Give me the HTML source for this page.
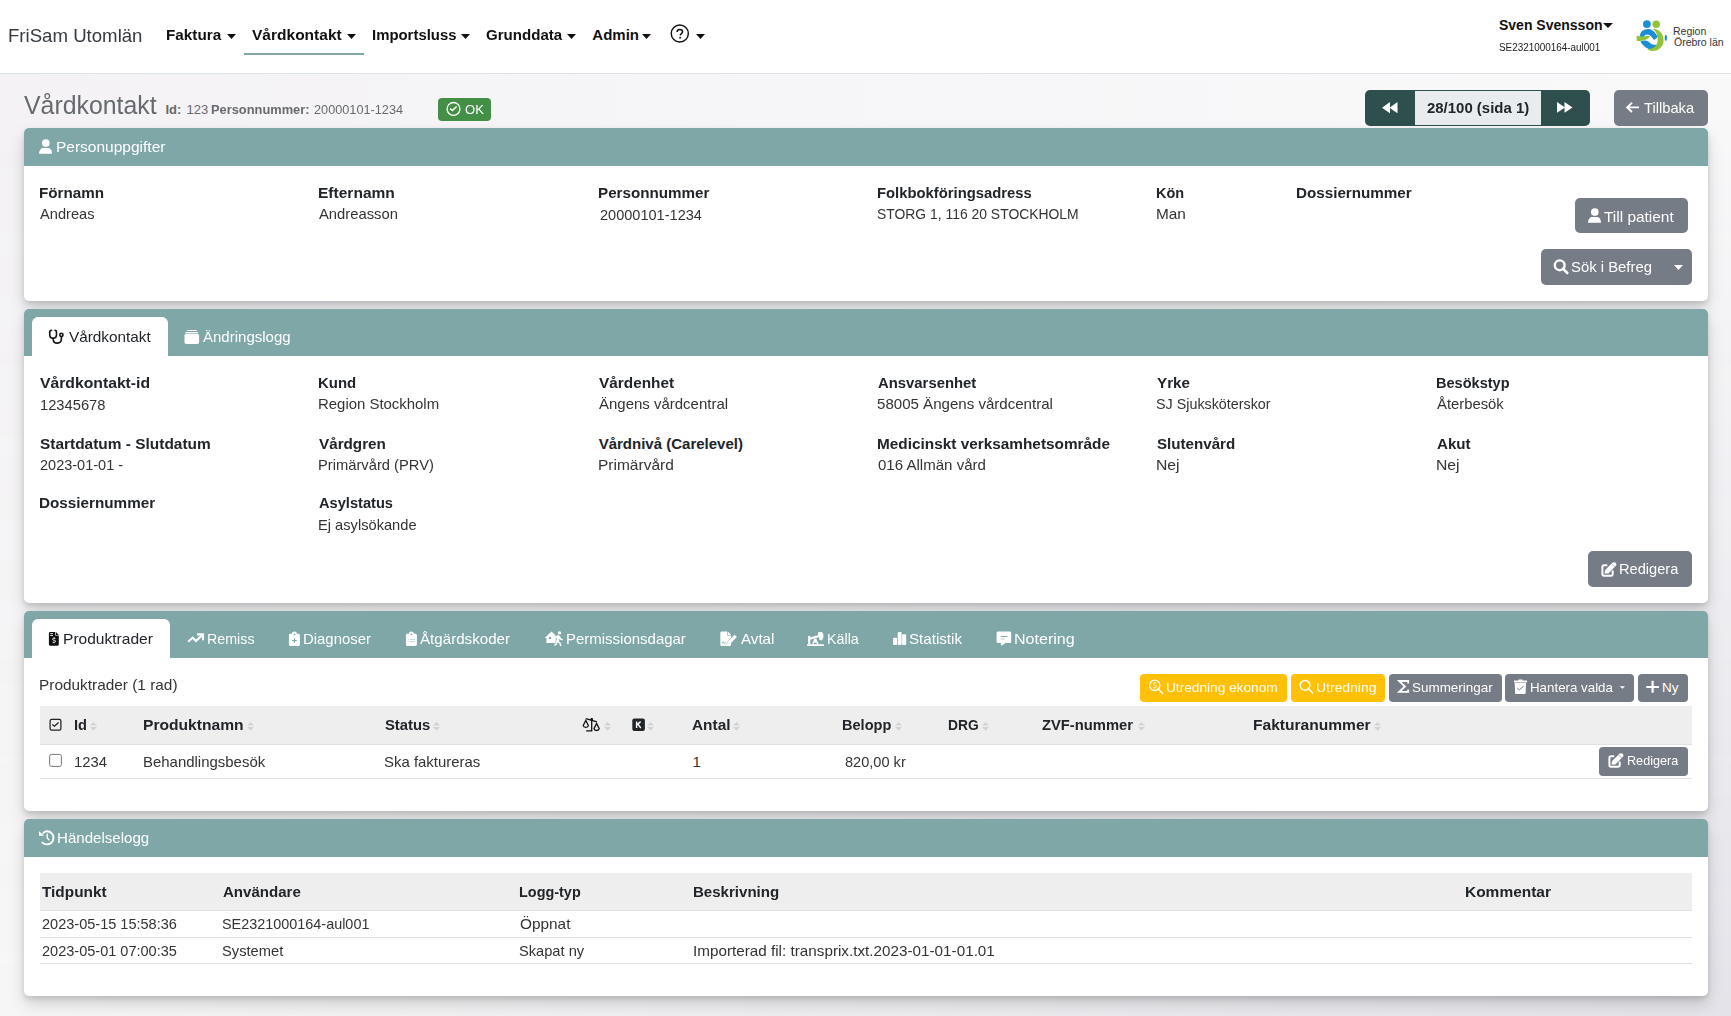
<!DOCTYPE html>
<html><head><meta charset="utf-8"><title>Vårdkontakt</title>
<style>
html,body{margin:0;padding:0}
body{width:1731px;height:1016px;overflow:hidden;position:relative;background:#f5f5f7;font-family:"Liberation Sans",sans-serif}
.a{position:absolute;box-sizing:border-box}
.t{position:absolute;line-height:1;white-space:nowrap}
svg.a{overflow:visible}
</style></head><body>
<div class="a" style="left:0px;top:0px;width:1731px;height:1016px;background:linear-gradient(to right,#f4f2f5,#f9f9fa)"></div>
<div class="a" style="left:0px;top:0px;width:1731px;height:1016px;background:linear-gradient(to right,#f6f6f6,#e4e3e9);-webkit-mask-image:linear-gradient(to bottom,transparent 10%,#000 100%);mask-image:linear-gradient(to bottom,transparent 10%,#000 100%)"></div>
<div class="a" style="left:0px;top:0px;width:1731px;height:74px;background:#fff;border-bottom:1px solid #dee2e6"></div>
<div class="t" style="left:7.79px;top:27.42px;font-size:18.4px;font-weight:400;color:#343a40;transform:scaleX(1.0122);transform-origin:0 0;">FriSam Utomlän</div>
<div class="t" style="left:166.18px;top:27.30px;font-size:15px;font-weight:700;color:#111;transform:scaleX(1.0185);transform-origin:0 0;">Faktura</div>
<div class="t" style="left:252.20px;top:27.30px;font-size:15px;font-weight:700;color:#111;transform:scaleX(1.0345);transform-origin:0 0;">Vårdkontakt</div>
<div class="t" style="left:371.51px;top:27.30px;font-size:15px;font-weight:700;color:#111;transform:scaleX(0.9940);transform-origin:0 0;">Importsluss</div>
<div class="t" style="left:485.80px;top:27.30px;font-size:15px;font-weight:700;color:#111;transform:scaleX(1.0053);transform-origin:0 0;">Grunddata</div>
<div class="t" style="left:592.30px;top:27.30px;font-size:15px;font-weight:700;color:#111;transform:scaleX(1.0000);transform-origin:0 0;">Admin</div>
<svg class="a" style="left:226.5px;top:33.9px;" width="9" height="5" viewBox="0 0 9 5" fill="#111"><path d="M0 0H9L4.5 5Z"/></svg>
<svg class="a" style="left:347.0px;top:33.9px;" width="9" height="5" viewBox="0 0 9 5" fill="#111"><path d="M0 0H9L4.5 5Z"/></svg>
<svg class="a" style="left:460.8px;top:33.9px;" width="9" height="5" viewBox="0 0 9 5" fill="#111"><path d="M0 0H9L4.5 5Z"/></svg>
<svg class="a" style="left:567.0px;top:33.9px;" width="9" height="5" viewBox="0 0 9 5" fill="#111"><path d="M0 0H9L4.5 5Z"/></svg>
<svg class="a" style="left:642.0px;top:33.9px;" width="9" height="5" viewBox="0 0 9 5" fill="#111"><path d="M0 0H9L4.5 5Z"/></svg>
<svg class="a" style="left:695.5px;top:33.9px;" width="9" height="5" viewBox="0 0 9 5" fill="#111"><path d="M0 0H9L4.5 5Z"/></svg>
<div class="a" style="left:244px;top:53px;width:120px;height:2px;background:#7fa7a7"></div>
<svg class="a" style="left:660px;top:18px" width="40" height="30" viewBox="0 0 40 30" fill="#fff" stroke="none"><circle cx="19.8" cy="15.5" r="8.55" fill="none" stroke="#111" stroke-width="1.45"/><path d="M17.1 13.9 C17.1 12.3 18.3 11.5 19.8 11.5 C21.5 11.5 22.6 12.4 22.6 13.8 C22.6 15.6 20.2 15.7 20.2 17.6" fill="none" stroke="#111" stroke-width="1.5"/><circle cx="20.1" cy="19.7" r="0.95" fill="#111"/></svg>
<div class="t" style="left:1499.00px;top:17.65px;font-size:14px;font-weight:700;color:#111;transform:scaleX(1.0000);transform-origin:0 0;">Sven Svensson</div>
<svg class="a" style="left:1602.5px;top:23px;" width="10" height="5" viewBox="0 0 10 5" fill="#111"><path d="M0 0H10L5 5Z"/></svg>
<div class="t" style="left:1499.00px;top:43.03px;font-size:10px;font-weight:400;color:#222;transform:scaleX(0.9902);transform-origin:0 0;">SE2321000164-aul001</div>
<svg class="a" style="left:1636px;top:20px;" width="32" height="32" viewBox="0 0 32 32" fill="#fff">
<circle cx="10.9" cy="4.1" r="3.9" fill="#1a8fd6"/>
<circle cx="20.2" cy="4.3" r="3.8" fill="#93c33b"/>
<path d="M4 18 C3 11 9 8.5 13 9 C17 9.5 19.5 13 22 17 L18 20 C16 17 14 14.5 11.5 14.5 C9 14.5 8 16 8 18 Z" fill="#1a8fd6"/>
<path d="M4.5 21.5 C7 20 11 20 13.5 22.5 C16 25 19 25.5 22 24 L21 29.5 C16 31 11 29 8 26 C6.5 24.5 5 23 4.5 21.5Z" fill="#1a8fd6"/>
<path d="M16.3 8.6 C23 8.8 27.6 13.5 27.6 20.5 C27.6 26.8 22.5 30.9 16.8 30.9 C14 30.9 12.2 30.1 11.2 29 C17 29.2 21.7 26.2 21.7 19.8 C21.7 14.4 19.6 10.8 16.3 8.6Z" fill="#93c33b"/>
<path d="M0.7 15.5 C4 16.5 7 17 10 16 C12 15.5 13 15.5 14 16.5 C12 19 9 21 0.7 21Z" fill="#93c33b"/>
<ellipse cx="29.8" cy="17.9" rx="1.15" ry="3.1" fill="#1a8fd6"/>
</svg>
<div class="t" style="left:1673.00px;top:26.31px;font-size:10.5px;font-weight:400;color:#333;transform:scaleX(1.0000);transform-origin:0 0;">Region</div>
<div class="t" style="left:1674.00px;top:36.61px;font-size:10.5px;font-weight:400;color:#333;transform:scaleX(1.0000);transform-origin:0 0;">Örebro län</div>
<div class="t" style="left:24.20px;top:92.64px;font-size:25px;font-weight:400;color:#666a6e;transform:scaleX(0.9940);transform-origin:0 0;">Vårdkontakt</div>
<div class="t" style="left:165.50px;top:102.80px;font-size:13px;font-weight:700;color:#666a6e;">Id:</div>
<div class="t" style="left:186.50px;top:102.80px;font-size:13px;font-weight:400;color:#666a6e;">123</div>
<div class="t" style="left:210.51px;top:102.80px;font-size:13px;font-weight:700;color:#666a6e;transform:scaleX(0.9878);transform-origin:0 0;">Personnummer:</div>
<div class="t" style="left:314.20px;top:102.80px;font-size:13px;font-weight:400;color:#666a6e;transform:scaleX(0.9780);transform-origin:0 0;">20000101-1234</div>
<div class="a" style="left:438px;top:98px;width:53px;height:23px;background:#428f45;border-radius:4px"></div>
<svg class="a" style="left:440px;top:98px" width="30" height="24" viewBox="0 0 30 24" fill="#fff" stroke="none"><circle cx="13.5" cy="10.9" r="6.4" fill="none" stroke="#fff" stroke-width="1.35"/><path d="M10.1 10.7 L12.4 12.6 L16.6 8.5" fill="none" stroke="#fff" stroke-width="1.5"/></svg>
<div class="t" style="left:465.10px;top:103.17px;font-size:13.5px;font-weight:400;color:#fff;transform:scaleX(0.9684);transform-origin:0 0;">OK</div>
<div class="a" style="left:1365px;top:90px;width:225px;height:36px;background:#2f4f4f;border-radius:5px"></div>
<div class="a" style="left:1415px;top:91px;width:126px;height:34px;background:#e9ecef"></div>
<div class="t" style="left:1426.70px;top:100.30px;font-size:15px;font-weight:700;color:#212529;transform:scaleX(0.9961);transform-origin:0 0;">28/100 (sida 1)</div>
<svg class="a" style="left:1382px;top:101.8px;" width="15.5" height="11.3" viewBox="0 0 15.5 11.3" fill="#fff"><path d="M8 0V11.3L0 5.65Z"/><path d="M15.5 0V11.3L7.5 5.65Z"/></svg>
<svg class="a" style="left:1557.2px;top:102.2px;" width="15.5" height="10.8" viewBox="0 0 15.5 10.8" fill="#fff"><path d="M0 0V10.8L8 5.4Z"/><path d="M7.5 0V10.8L15.5 5.4Z"/></svg>
<div class="a" style="left:1614px;top:90px;width:94px;height:36px;background:#757c86;border-radius:5px"></div>
<svg class="a" style="left:1626.4px;top:102.2px;" width="13.3" height="10.8" viewBox="0 0 13.3 10.8" fill="#fff"><path d="M13 5.4H1.5M6 0.8L1.2 5.4L6 10" fill="none" stroke="#fff" stroke-width="1.9"/></svg>
<div class="t" style="left:1644.00px;top:100.30px;font-size:15px;font-weight:400;color:#fff;transform:scaleX(0.9804);transform-origin:0 0;">Tillbaka</div>
<div class="a" style="left:24px;top:128px;width:1684px;height:173px;background:#fff;border-radius:5px;box-shadow:0 3px 5px rgba(0,0,0,.12),0 8px 16px rgba(0,0,0,.15)"></div>
<div class="a" style="left:24px;top:128px;width:1684px;height:38px;background:#7fa7a7;border-radius:5px 5px 0 0"></div>
<svg class="a" style="left:34px;top:134px" width="26" height="26" viewBox="0 0 26 26" fill="#fff" stroke="none"><circle cx="11.8" cy="9.1" r="3.85"/><path d="M5.1 19.8 C5.1 16 7.2 14.1 9.6 14.1 H14 C16.2 14.1 18 16 18 19.8 Z"/></svg>
<div class="t" style="left:55.59px;top:139.25px;font-size:15.3px;font-weight:400;color:#fff;transform:scaleX(1.0131);transform-origin:0 0;">Personuppgifter</div>
<div class="t" style="left:39.09px;top:185.30px;font-size:15px;font-weight:700;color:#212529;transform:scaleX(1.0143);transform-origin:0 0;">Förnamn</div>
<div class="t" style="left:40.10px;top:206.30px;font-size:15px;font-weight:400;color:#333;transform:scaleX(0.9750);transform-origin:0 0;">Andreas</div>
<div class="t" style="left:318.06px;top:185.30px;font-size:15px;font-weight:700;color:#212529;transform:scaleX(1.0356);transform-origin:0 0;">Efternamn</div>
<div class="t" style="left:319.10px;top:206.30px;font-size:15px;font-weight:400;color:#333;transform:scaleX(0.9862);transform-origin:0 0;">Andreasson</div>
<div class="t" style="left:597.89px;top:185.30px;font-size:15px;font-weight:700;color:#212529;transform:scaleX(1.0128);transform-origin:0 0;">Personnummer</div>
<div class="t" style="left:600.20px;top:207.30px;font-size:15px;font-weight:400;color:#333;transform:scaleX(0.9695);transform-origin:0 0;">20000101-1234</div>
<div class="t" style="left:877.11px;top:185.30px;font-size:15px;font-weight:700;color:#212529;transform:scaleX(0.9877);transform-origin:0 0;">Folkbokföringsadress</div>
<div class="t" style="left:877.17px;top:206.30px;font-size:15px;font-weight:400;color:#333;transform:scaleX(0.9269);transform-origin:0 0;">STORG 1, 116 20 STOCKHOLM</div>
<div class="t" style="left:1156.34px;top:185.30px;font-size:15px;font-weight:700;color:#212529;transform:scaleX(0.9643);transform-origin:0 0;">Kön</div>
<div class="t" style="left:1156.27px;top:206.30px;font-size:15px;font-weight:400;color:#333;transform:scaleX(1.0250);transform-origin:0 0;">Man</div>
<div class="t" style="left:1295.99px;top:185.30px;font-size:15px;font-weight:700;color:#212529;transform:scaleX(1.0133);transform-origin:0 0;">Dossiernummer</div>
<div class="a" style="left:1575px;top:198px;width:113px;height:35px;background:#757c86;border-radius:5px"></div>
<svg class="a" style="left:1582.5px;top:203.1px" width="26" height="26" viewBox="0 0 26 26" fill="#fff" stroke="none"><circle cx="11.8" cy="9.1" r="3.85"/><path d="M5.1 19.8 C5.1 16 7.2 14.1 9.6 14.1 H14 C16.2 14.1 18 16 18 19.8 Z"/></svg>
<div class="t" style="left:1604.40px;top:208.60px;font-size:15px;font-weight:400;color:#fff;transform:scaleX(1.0279);transform-origin:0 0;">Till patient</div>
<div class="a" style="left:1541px;top:249px;width:151px;height:36px;background:#757c86;border-radius:5px"></div>
<svg class="a" style="left:1548px;top:254px" width="26" height="26" viewBox="0 0 26 26" fill="#fff" stroke="none"><circle cx="11.7" cy="11.3" r="4.9" fill="none" stroke="#fff" stroke-width="2.4"/><path d="M15.2 14.9 L19.3 19" stroke="#fff" stroke-width="2.6" stroke-linecap="round"/></svg>
<div class="t" style="left:1571.31px;top:258.80px;font-size:15px;font-weight:400;color:#fff;transform:scaleX(0.9912);transform-origin:0 0;">Sök i Befreg</div>
<svg class="a" style="left:1674px;top:265px;" width="9" height="5" viewBox="0 0 9 5" fill="#fff"><path d="M0 0H9L4.5 5Z"/></svg>
<div class="a" style="left:24px;top:309px;width:1684px;height:294px;background:#fff;border-radius:5px;box-shadow:0 3px 5px rgba(0,0,0,.12),0 8px 16px rgba(0,0,0,.15)"></div>
<div class="a" style="left:24px;top:309px;width:1684px;height:47px;background:#7fa7a7;border-radius:5px 5px 0 0"></div>
<div class="a" style="left:32px;top:317px;width:136px;height:40px;background:#fff;border-radius:6px 6px 0 0"></div>
<svg class="a" style="left:44px;top:326px" width="26" height="26" viewBox="0 0 26 26" fill="#fff" stroke="none"><g fill="none" stroke="#111" stroke-width="1.6" stroke-linecap="round"><path d="M7.6 4.3 C6.3 4.3 5.7 5.4 5.7 6.8 V8.6 C5.7 10.8 7.2 12.3 9.1 12.3 C11 12.3 12.5 10.8 12.5 8.6 V6.8 C12.5 5.4 11.9 4.3 11 4.3"/><path d="M9.1 12.4 C9.1 15.3 11 17.1 13.4 17.1 C15.8 17.1 17.4 15.3 17.4 12.8 V10.6"/><circle cx="17.4" cy="8.9" r="1.6"/></g></svg>
<div class="t" style="left:68.60px;top:328.80px;font-size:15px;font-weight:400;color:#212529;transform:scaleX(1.0213);transform-origin:0 0;">Vårdkontakt</div>
<svg class="a" style="left:180px;top:326px" width="26" height="26" viewBox="0 0 26 26" fill="#fff" stroke="none"><rect x="7.1" y="3.9" width="9.8" height="1.1" rx="0.5"/><rect x="5.4" y="6.1" width="12.6" height="1.05" rx="0.5"/><rect x="4.5" y="7.8" width="14.6" height="10.2" rx="1.8"/></svg>
<div class="t" style="left:202.90px;top:328.80px;font-size:15px;font-weight:400;color:#fff;transform:scaleX(1.0011);transform-origin:0 0;">Ändringslogg</div>
<div class="t" style="left:39.70px;top:375.30px;font-size:15px;font-weight:700;color:#212529;transform:scaleX(1.0481);transform-origin:0 0;">Vårdkontakt-id</div>
<div class="t" style="left:40.32px;top:397.20px;font-size:15px;font-weight:400;color:#333;transform:scaleX(0.9803);transform-origin:0 0;">12345678</div>
<div class="t" style="left:317.90px;top:375.30px;font-size:15px;font-weight:700;color:#212529;transform:scaleX(0.9973);transform-origin:0 0;">Kund</div>
<div class="t" style="left:317.90px;top:396.20px;font-size:15px;font-weight:400;color:#333;transform:scaleX(0.9950);transform-origin:0 0;">Region Stockholm</div>
<div class="t" style="left:598.70px;top:375.30px;font-size:15px;font-weight:700;color:#212529;transform:scaleX(1.0247);transform-origin:0 0;">Vårdenhet</div>
<div class="t" style="left:598.70px;top:396.20px;font-size:15px;font-weight:400;color:#333;transform:scaleX(0.9984);transform-origin:0 0;">Ängens vårdcentral</div>
<div class="t" style="left:877.90px;top:375.30px;font-size:15px;font-weight:700;color:#212529;transform:scaleX(0.9909);transform-origin:0 0;">Ansvarsenhet</div>
<div class="t" style="left:876.90px;top:396.20px;font-size:15px;font-weight:400;color:#333;transform:scaleX(1.0046);transform-origin:0 0;">58005 Ängens vårdcentral</div>
<div class="t" style="left:1157.10px;top:375.30px;font-size:15px;font-weight:700;color:#212529;transform:scaleX(1.0125);transform-origin:0 0;">Yrke</div>
<div class="t" style="left:1156.15px;top:396.20px;font-size:15px;font-weight:400;color:#333;transform:scaleX(0.9546);transform-origin:0 0;">SJ Sjuksköterskor</div>
<div class="t" style="left:1436.03px;top:375.30px;font-size:15px;font-weight:700;color:#212529;transform:scaleX(0.9693);transform-origin:0 0;">Besökstyp</div>
<div class="t" style="left:1437.00px;top:396.20px;font-size:15px;font-weight:400;color:#333;transform:scaleX(0.9882);transform-origin:0 0;">Återbesök</div>
<div class="t" style="left:39.70px;top:435.60px;font-size:15px;font-weight:700;color:#212529;transform:scaleX(1.0297);transform-origin:0 0;">Startdatum - Slutdatum</div>
<div class="t" style="left:39.70px;top:456.90px;font-size:15px;font-weight:400;color:#333;transform:scaleX(0.9674);transform-origin:0 0;">2023-01-01 -</div>
<div class="t" style="left:318.90px;top:435.60px;font-size:15px;font-weight:700;color:#212529;transform:scaleX(1.0154);transform-origin:0 0;">Vårdgren</div>
<div class="t" style="left:317.92px;top:456.90px;font-size:15px;font-weight:400;color:#333;transform:scaleX(0.9819);transform-origin:0 0;">Primärvård (PRV)</div>
<div class="t" style="left:598.70px;top:435.60px;font-size:15px;font-weight:700;color:#212529;transform:scaleX(1.0000);transform-origin:0 0;">Vårdnivå (Carelevel)</div>
<div class="t" style="left:597.67px;top:456.90px;font-size:15px;font-weight:400;color:#333;transform:scaleX(1.0333);transform-origin:0 0;">Primärvård</div>
<div class="t" style="left:876.88px;top:435.60px;font-size:15px;font-weight:700;color:#212529;transform:scaleX(1.0239);transform-origin:0 0;">Medicinskt verksamhetsområde</div>
<div class="t" style="left:877.90px;top:456.90px;font-size:15px;font-weight:400;color:#333;transform:scaleX(1.0037);transform-origin:0 0;">016 Allmän vård</div>
<div class="t" style="left:1157.10px;top:435.60px;font-size:15px;font-weight:700;color:#212529;transform:scaleX(1.0091);transform-origin:0 0;">Slutenvård</div>
<div class="t" style="left:1156.05px;top:456.90px;font-size:15px;font-weight:400;color:#333;transform:scaleX(1.0476);transform-origin:0 0;">Nej</div>
<div class="t" style="left:1437.00px;top:435.60px;font-size:15px;font-weight:700;color:#212529;transform:scaleX(1.0091);transform-origin:0 0;">Akut</div>
<div class="t" style="left:1435.95px;top:456.90px;font-size:15px;font-weight:400;color:#333;transform:scaleX(1.0476);transform-origin:0 0;">Nej</div>
<div class="t" style="left:38.68px;top:495.40px;font-size:15px;font-weight:700;color:#212529;transform:scaleX(1.0168);transform-origin:0 0;">Dossiernummer</div>
<div class="t" style="left:318.90px;top:495.40px;font-size:15px;font-weight:700;color:#212529;transform:scaleX(0.9750);transform-origin:0 0;">Asylstatus</div>
<div class="t" style="left:317.92px;top:516.80px;font-size:15px;font-weight:400;color:#333;transform:scaleX(0.9770);transform-origin:0 0;">Ej asylsökande</div>
<div class="a" style="left:1588px;top:551px;width:104px;height:36px;background:#757c86;border-radius:5px"></div>
<svg class="a" style="left:1596px;top:556.6px" width="26" height="26" viewBox="0 0 26 26" fill="#fff" stroke="none"><path d="M11.3 8.2 H8 C6.9 8.2 6.4 8.8 6.4 9.9 V17 C6.4 18.1 6.9 18.7 8 18.7 H15 C16.1 18.7 16.7 18.1 16.7 17 V13.4" fill="none" stroke="#fff" stroke-width="2"/><path d="M8.4 16.6 L9.1 13.1 L16.4 5.8 C17.3 4.9 18.8 4.9 19.7 5.8 C20.6 6.7 20.6 8.2 19.7 9.1 L12.4 16.4 Z"/><path d="M15.6 6.9 L18.7 10" stroke="#757c86" stroke-width="0.55"/></svg>
<div class="t" style="left:1618.53px;top:561.00px;font-size:15px;font-weight:400;color:#fff;transform:scaleX(0.9750);transform-origin:0 0;">Redigera</div>
<div class="a" style="left:24px;top:611px;width:1684px;height:200px;background:#fff;border-radius:5px;box-shadow:0 3px 5px rgba(0,0,0,.12),0 8px 16px rgba(0,0,0,.15)"></div>
<div class="a" style="left:24px;top:611px;width:1684px;height:47px;background:#7fa7a7;border-radius:5px 5px 0 0"></div>
<div class="a" style="left:32px;top:619px;width:138px;height:40px;background:#fff;border-radius:6px 6px 0 0"></div>
<div class="t" style="left:62.56px;top:630.80px;font-size:15px;font-weight:400;color:#212529;transform:scaleX(1.0372);transform-origin:0 0;">Produktrader</div>
<div class="t" style="left:206.75px;top:630.80px;font-size:15px;font-weight:400;color:#fff;transform:scaleX(0.9510);transform-origin:0 0;">Remiss</div>
<div class="t" style="left:302.91px;top:630.80px;font-size:15px;font-weight:400;color:#fff;transform:scaleX(0.9941);transform-origin:0 0;">Diagnoser</div>
<div class="t" style="left:420.40px;top:630.80px;font-size:15px;font-weight:400;color:#fff;transform:scaleX(1.0090);transform-origin:0 0;">Åtgärdskoder</div>
<div class="t" style="left:566.20px;top:630.80px;font-size:15px;font-weight:400;color:#fff;transform:scaleX(0.9983);transform-origin:0 0;">Permissionsdagar</div>
<div class="t" style="left:741.00px;top:630.80px;font-size:15px;font-weight:400;color:#fff;transform:scaleX(1.0094);transform-origin:0 0;">Avtal</div>
<div class="t" style="left:826.65px;top:630.80px;font-size:15px;font-weight:400;color:#fff;transform:scaleX(0.9515);transform-origin:0 0;">Källa</div>
<div class="t" style="left:908.99px;top:630.80px;font-size:15px;font-weight:400;color:#fff;transform:scaleX(1.0096);transform-origin:0 0;">Statistik</div>
<div class="t" style="left:1014.23px;top:630.80px;font-size:15px;font-weight:400;color:#fff;transform:scaleX(1.0709);transform-origin:0 0;">Notering</div>
<div class="t" style="left:38.97px;top:677.40px;font-size:15px;font-weight:400;color:#333;transform:scaleX(1.0256);transform-origin:0 0;">Produktrader (1 rad)</div>
<div class="a" style="left:1140px;top:674px;width:147px;height:28px;background:#ffc107;border-radius:4px"></div>
<div class="t" style="left:1166.09px;top:680.87px;font-size:13.5px;font-weight:400;color:#fff;transform:scaleX(1.0119);transform-origin:0 0;">Utredning ekonom</div>
<div class="a" style="left:1291px;top:674px;width:94px;height:28px;background:#ffc107;border-radius:4px"></div>
<div class="t" style="left:1316.17px;top:680.87px;font-size:13.5px;font-weight:400;color:#fff;transform:scaleX(1.0333);transform-origin:0 0;">Utredning</div>
<div class="a" style="left:1389px;top:674px;width:113px;height:28px;background:#757c86;border-radius:4px"></div>
<div class="t" style="left:1411.70px;top:680.87px;font-size:13.5px;font-weight:400;color:#fff;transform:scaleX(0.9963);transform-origin:0 0;">Summeringar</div>
<div class="a" style="left:1505px;top:674px;width:129px;height:28px;background:#757c86;border-radius:4px"></div>
<div class="t" style="left:1529.61px;top:680.87px;font-size:13.5px;font-weight:400;color:#fff;transform:scaleX(0.9867);transform-origin:0 0;">Hantera valda</div>
<div class="a" style="left:1638px;top:674px;width:50px;height:28px;background:#757c86;border-radius:4px"></div>
<div class="t" style="left:1662.00px;top:680.87px;font-size:13.5px;font-weight:400;color:#fff;transform:scaleX(1.0000);transform-origin:0 0;">Ny</div>
<div class="a" style="left:40px;top:706px;width:1652px;height:39px;background:#eeeeee;border-bottom:1px solid #dee2e6"></div>
<div class="t" style="left:73.73px;top:717.30px;font-size:15px;font-weight:700;color:#212529;transform:scaleX(0.9750);transform-origin:0 0;">Id</div>
<div class="t" style="left:143.36px;top:717.30px;font-size:15px;font-weight:700;color:#212529;transform:scaleX(1.0400);transform-origin:0 0;">Produktnamn</div>
<div class="t" style="left:384.60px;top:717.30px;font-size:15px;font-weight:700;color:#212529;transform:scaleX(0.9870);transform-origin:0 0;">Status</div>
<div class="t" style="left:691.90px;top:717.30px;font-size:15px;font-weight:700;color:#212529;transform:scaleX(1.0270);transform-origin:0 0;">Antal</div>
<div class="t" style="left:841.93px;top:717.30px;font-size:15px;font-weight:700;color:#212529;transform:scaleX(0.9700);transform-origin:0 0;">Belopp</div>
<div class="t" style="left:948.28px;top:717.30px;font-size:15px;font-weight:700;color:#212529;transform:scaleX(0.9219);transform-origin:0 0;">DRG</div>
<div class="t" style="left:1042.40px;top:717.30px;font-size:15px;font-weight:700;color:#212529;transform:scaleX(0.9839);transform-origin:0 0;">ZVF-nummer</div>
<div class="t" style="left:1253.06px;top:717.30px;font-size:15px;font-weight:700;color:#212529;transform:scaleX(1.0381);transform-origin:0 0;">Fakturanummer</div>
<div class="a" style="left:40px;top:778px;width:1652px;height:1px;background:#dee2e6"></div>
<div class="t" style="left:73.71px;top:754.00px;font-size:15px;font-weight:400;color:#333;transform:scaleX(0.9875);transform-origin:0 0;">1234</div>
<div class="t" style="left:143.40px;top:754.00px;font-size:15px;font-weight:400;color:#333;transform:scaleX(0.9967);transform-origin:0 0;">Behandlingsbesök</div>
<div class="t" style="left:383.60px;top:754.00px;font-size:15px;font-weight:400;color:#333;transform:scaleX(0.9958);transform-origin:0 0;">Ska faktureras</div>
<div class="t" style="left:692.50px;top:754.00px;font-size:15px;font-weight:400;color:#333;">1</div>
<div class="t" style="left:845.00px;top:754.00px;font-size:15px;font-weight:400;color:#333;transform:scaleX(0.9714);transform-origin:0 0;">820,00 kr</div>
<div class="a" style="left:1599px;top:747px;width:89px;height:29px;background:#757c86;border-radius:4px"></div>
<svg class="a" style="left:1602.6px;top:748.1px" width="26" height="26" viewBox="0 0 26 26" fill="#fff" stroke="none"><path d="M11.3 8.2 H8 C6.9 8.2 6.4 8.8 6.4 9.9 V17 C6.4 18.1 6.9 18.7 8 18.7 H15 C16.1 18.7 16.7 18.1 16.7 17 V13.4" fill="none" stroke="#fff" stroke-width="2"/><path d="M8.4 16.6 L9.1 13.1 L16.4 5.8 C17.3 4.9 18.8 4.9 19.7 5.8 C20.6 6.7 20.6 8.2 19.7 9.1 L12.4 16.4 Z"/><path d="M15.6 6.9 L18.7 10" stroke="#757c86" stroke-width="0.55"/></svg>
<div class="t" style="left:1626.56px;top:754.07px;font-size:13.5px;font-weight:400;color:#fff;transform:scaleX(0.9352);transform-origin:0 0;">Redigera</div>
<div class="a" style="left:24px;top:819px;width:1684px;height:177px;background:#fff;border-radius:5px;box-shadow:0 3px 5px rgba(0,0,0,.12),0 8px 16px rgba(0,0,0,.15)"></div>
<div class="a" style="left:24px;top:819px;width:1684px;height:38px;background:#7fa7a7;border-radius:5px 5px 0 0"></div>
<div class="t" style="left:57.20px;top:829.90px;font-size:15px;font-weight:400;color:#fff;transform:scaleX(1.0044);transform-origin:0 0;">Händelselogg</div>
<div class="a" style="left:40px;top:873px;width:1652px;height:38px;background:#eeeeee;border-bottom:1px solid #dee2e6"></div>
<div class="t" style="left:41.80px;top:884.00px;font-size:15px;font-weight:700;color:#212529;transform:scaleX(1.0238);transform-origin:0 0;">Tidpunkt</div>
<div class="t" style="left:223.20px;top:884.00px;font-size:15px;font-weight:700;color:#212529;transform:scaleX(1.0039);transform-origin:0 0;">Användare</div>
<div class="t" style="left:518.64px;top:884.00px;font-size:15px;font-weight:700;color:#212529;transform:scaleX(0.9619);transform-origin:0 0;">Logg-typ</div>
<div class="t" style="left:692.90px;top:884.00px;font-size:15px;font-weight:700;color:#212529;transform:scaleX(1.0036);transform-origin:0 0;">Beskrivning</div>
<div class="t" style="left:1465.37px;top:884.00px;font-size:15px;font-weight:700;color:#212529;transform:scaleX(1.0313);transform-origin:0 0;">Kommentar</div>
<div class="a" style="left:40px;top:937px;width:1652px;height:1px;background:#dee2e6"></div>
<div class="a" style="left:40px;top:963px;width:1652px;height:1px;background:#dee2e6"></div>
<div class="t" style="left:41.80px;top:916.10px;font-size:15px;font-weight:400;color:#333;transform:scaleX(0.9683);transform-origin:0 0;">2023-05-15 15:58:36</div>
<div class="t" style="left:222.24px;top:916.10px;font-size:15px;font-weight:400;color:#333;transform:scaleX(0.9605);transform-origin:0 0;">SE2321000164-aul001</div>
<div class="t" style="left:519.60px;top:916.10px;font-size:15px;font-weight:400;color:#333;transform:scaleX(1.0245);transform-origin:0 0;">Öppnat</div>
<div class="t" style="left:41.80px;top:943.00px;font-size:15px;font-weight:400;color:#333;transform:scaleX(0.9683);transform-origin:0 0;">2023-05-01 07:00:35</div>
<div class="t" style="left:222.22px;top:943.00px;font-size:15px;font-weight:400;color:#333;transform:scaleX(0.9790);transform-origin:0 0;">Systemet</div>
<div class="t" style="left:518.62px;top:943.00px;font-size:15px;font-weight:400;color:#333;transform:scaleX(0.9758);transform-origin:0 0;">Skapat ny</div>
<div class="t" style="left:692.88px;top:943.00px;font-size:15px;font-weight:400;color:#333;transform:scaleX(1.0169);transform-origin:0 0;">Importerad fil: transprix.txt.2023-01-01-01.01</div>
<svg class="a" style="left:44px;top:626px" width="26" height="26" viewBox="0 0 26 26" fill="#fff" stroke="none"><path d="M4.9 7.4 C4.9 6.5 5.4 5.9 6.3 5.9 H11.2 V9.6 H14.8 V18.3 C14.8 19.2 14.3 19.7 13.4 19.7 H6.3 C5.4 19.7 4.9 19.2 4.9 18.3 Z M11.9 5.9 L14.8 8.9 H11.9 Z" fill="#111"/><rect x="6.3" y="7.2" width="2.6" height="0.9" fill="#fff"/><rect x="6.3" y="9" width="2.6" height="0.9" fill="#fff"/><path d="M11.4 12.3 H9.6 C8.9 12.3 8.6 12.7 8.6 13.2 C8.6 13.8 9 14.1 9.6 14.2 L10.6 14.3 C11.2 14.4 11.5 14.7 11.5 15.3 C11.5 15.9 11.1 16.2 10.5 16.2 H8.6 M10 11.3 V12.3 M10 16.2 V17.3" fill="none" stroke="#fff" stroke-width="0.9"/></svg>
<svg class="a" style="left:183px;top:626px" width="26" height="26" viewBox="0 0 26 26" fill="#fff" stroke="none"><path d="M5.2 15.8 L9.7 11.6 L13 15 L19 9.3" fill="none" stroke="#fff" stroke-width="2.1" stroke-linejoin="miter"/><path d="M14 8.4 H20 V14.3" fill="none" stroke="#fff" stroke-width="2.1"/></svg>
<svg class="a" style="left:284px;top:626px" width="26" height="26" viewBox="0 0 26 26" fill="#fff" stroke="none"><path d="M4.9 9.2 C4.9 8.3 5.5 7.7 6.4 7.7 H7.9 C8 6.3 9.1 5.4 10.4 5.4 C11.7 5.4 12.8 6.3 12.9 7.7 H14.4 C15.3 7.7 15.9 8.3 15.9 9.2 V18.4 C15.9 19.3 15.3 19.9 14.4 19.9 H6.4 C5.5 19.9 4.9 19.3 4.9 18.4 Z"/><circle cx="10.5" cy="8.4" r="0.8" fill="#7fa7a7"/><path d="M10.5 12.2 V16.7 M8.2 14.5 H12.8" stroke="#7fa7a7" stroke-width="1.2"/></svg>
<svg class="a" style="left:401px;top:626px" width="26" height="26" viewBox="0 0 26 26" fill="#fff" stroke="none"><path d="M4.9 9.2 C4.9 8.3 5.5 7.7 6.4 7.7 H7.9 C8 6.3 9.1 5.4 10.4 5.4 C11.7 5.4 12.8 6.3 12.9 7.7 H14.4 C15.3 7.7 15.9 8.3 15.9 9.2 V18.4 C15.9 19.3 15.3 19.9 14.4 19.9 H6.4 C5.5 19.9 4.9 19.3 4.9 18.4 Z"/><circle cx="10.4" cy="8.4" r="0.8" fill="#7fa7a7"/><path d="M7 13.4 H7.8 M9 13.4 H13.9 M7 15.5 H7.8 M9 15.5 H13.9" stroke="#b8cfcf" stroke-width="0.9"/></svg>
<svg class="a" style="left:541px;top:626px" width="26" height="26" viewBox="0 0 26 26" fill="#fff" stroke="none"><path d="M3.6 12 L10.5 5.6 L14.6 9.4 V17.1 H5.4 V12 Z"/><rect x="8" y="11" width="2.1" height="2" fill="#7fa7a7"/><circle cx="18.5" cy="6.9" r="1.7"/><path d="M16.2 9.3 C17.5 9 18.8 9.6 19.3 10.7 L20.1 12.6 L21.9 13.1 L21.5 14.4 L19.2 13.8 L18.6 12.6 L18 15.2 L20 17.2 L20.4 19.9 H19 L18.5 17.8 L16.7 16.3 L15.7 18.6 L13.8 19.9 L13 18.9 L14.6 17.6 L16.2 11.8 L15 12.6 L14.8 14.3 L13.5 14 L13.8 11.8 Z"/></svg>
<svg class="a" style="left:716px;top:626px" width="26" height="26" viewBox="0 0 26 26" fill="#fff" stroke="none"><path d="M4.35 7.2 C4.35 6.2 4.9 5.6 5.9 5.6 H11.3 V9.5 H15.1 V11.8 L11 15.9 L10.5 18.4 L13 17.9 L15.1 15.8 V18.5 C15.1 19.5 14.5 20 13.5 20 H5.9 C4.9 20 4.35 19.5 4.35 18.5 Z M11.9 5.6 L15.1 8.9 H11.9 Z"/><path d="M11.3 16.1 L18.6 8.8 L20.9 11.1 L13.6 18.4 L11 18.8 Z"/><path d="M6 17.6 L7.2 15.6 L8.3 17.4 L9.4 16.6 L10.4 17.6" fill="none" stroke="#7fa7a7" stroke-width="0.7"/></svg>
<svg class="a" style="left:803px;top:626px" width="26" height="26" viewBox="0 0 26 26" fill="#fff" stroke="none"><rect x="4.1" y="18.2" width="16.9" height="1.9" rx="0.4"/><rect x="5.1" y="10" width="2.2" height="8.3"/><path d="M7 11.5 L11.5 10.2 L12 9.4 L12.7 9.7 L15.3 9.2 L15.3 11.4 L7 13.8 Z"/><path d="M15.1 6.6 C15.1 6.1 15.5 5.9 16 5.9 H18.9 C19.9 7 20.5 8.7 20.5 10.3 C20.5 12.2 19.6 13.7 18.5 14.6 L16 13.6 C16.6 12.6 16.2 11.3 15.1 10.6 Z"/><path d="M9.1 18.3 L11.3 12.8 H13.4 L15.6 18.3 H14 L13.4 16.7 H11.1 L10.6 18.3 Z"/></svg>
<svg class="a" style="left:888px;top:626px" width="26" height="26" viewBox="0 0 26 26" fill="#fff" stroke="none"><rect x="5.1" y="11.8" width="3.9" height="7.1" rx="0.9"/><rect x="9.7" y="6.1" width="3.9" height="12.8" rx="0.9"/><rect x="14.1" y="8.2" width="4.1" height="10.7" rx="0.9"/></svg>
<svg class="a" style="left:991px;top:626px" width="26" height="26" viewBox="0 0 26 26" fill="#fff" stroke="none"><path d="M5.6 7.3 C5.6 6.3 6.2 5.6 7.3 5.6 H18.5 C19.6 5.6 20.2 6.3 20.2 7.3 V15.4 C20.2 16.5 19.6 17.1 18.5 17.1 H14.5 L10.5 19.8 L9.7 17.1 H7.3 C6.2 17.1 5.6 16.5 5.6 15.4 Z"/><rect x="9.7" y="10" width="6.7" height="1" fill="#7fa7a7"/><rect x="9.7" y="12.3" width="4.1" height="1.2" fill="#c0d3d3"/></svg>
<svg class="a" style="left:1144px;top:676px" width="26" height="26" viewBox="0 0 26 26" fill="#fff" stroke="none"><circle cx="10.7" cy="9.3" r="5.15" fill="none" stroke="#fff" stroke-width="1.35"/><path d="M14.5 13.2 L18.6 17.4" stroke="#fff" stroke-width="1.5" stroke-linecap="round"/><path d="M12.2 7.6 C11.9 7 11.4 6.9 10.7 6.9 C9.8 6.9 9.3 7.4 9.3 8 C9.3 9.6 12.2 8.9 12.2 10.6 C12.2 11.3 11.6 11.7 10.7 11.7 C10 11.7 9.4 11.5 9.2 10.9 M10.7 6.1 V6.9 M10.7 11.7 V12.6" fill="none" stroke="#fff" stroke-width="1"/></svg>
<svg class="a" style="left:1295px;top:676px" width="26" height="26" viewBox="0 0 26 26" fill="#fff" stroke="none"><circle cx="10" cy="9.35" r="4.9" fill="none" stroke="#fff" stroke-width="1.5"/><path d="M13.6 13 L17.6 17.1" stroke="#fff" stroke-width="1.5" stroke-linecap="round"/></svg>
<svg class="a" style="left:1394px;top:676px" width="26" height="26" viewBox="0 0 26 26" fill="#fff" stroke="none"><path d="M14.2 7.4 V5 H5.2 L10.9 10.45 L5.2 15.9 H14.2 V13.4" fill="none" stroke="#fff" stroke-width="1.9" stroke-linejoin="miter"/></svg>
<svg class="a" style="left:1509px;top:676px" width="26" height="26" viewBox="0 0 26 26" fill="#fff" stroke="none"><path d="M5 4.5 H9.2 L9.6 3.5 H13.4 L13.8 4.5 H18 V6.4 H5 Z"/><path d="M5.7 6.9 H17 L16.6 17 C16.6 17.6 16.1 18 15.5 18 H7.2 C6.6 18 6.1 17.6 6.1 17 Z"/><path d="M8.3 12.2 L10.4 13.9 L14.6 10.2" fill="none" stroke="#757c86" stroke-width="1"/></svg>
<svg class="a" style="left:1642px;top:676px" width="26" height="26" viewBox="0 0 26 26" fill="#fff" stroke="none"><path d="M10.6 4.7 V16.8 M4.3 11 H17" stroke="#fff" stroke-width="2.2"/></svg>
<svg class="a" style="left:1617px;top:683px" width="12" height="8" viewBox="0 0 12 8" fill="#fff" stroke="none"><path d="M2.8 3.2 H8 L5.4 5.8 Z"/></svg>
<svg class="a" style="left:44px;top:712px" width="26" height="26" viewBox="0 0 26 26" fill="#fff" stroke="none"><rect x="6.1" y="7.4" width="10.8" height="10.8" rx="1.6" fill="none" stroke="#222" stroke-width="1.25"/><path d="M8.3 12.4 L10.5 14.2 L14.6 10.4" fill="none" stroke="#222" stroke-width="1.3"/></svg>
<svg class="a" style="left:44px;top:748px" width="26" height="26" viewBox="0 0 26 26" fill="#fff" stroke="none"><rect x="5.6" y="6.4" width="11.8" height="12" rx="2" fill="#fff" stroke="#767676" stroke-width="1"/></svg>
<svg class="a" style="left:89.1px;top:720px" width="10" height="12" viewBox="0 0 10 12" fill="#fff" stroke="none"><path d="M1 5.6 L4.5 2 L8 5.6 Z M1 7 H8 L4.5 10.8 Z" fill="#d3d3d3"/></svg>
<svg class="a" style="left:245.6px;top:720px" width="10" height="12" viewBox="0 0 10 12" fill="#fff" stroke="none"><path d="M1 5.6 L4.5 2 L8 5.6 Z M1 7 H8 L4.5 10.8 Z" fill="#d3d3d3"/></svg>
<svg class="a" style="left:431.7px;top:720px" width="10" height="12" viewBox="0 0 10 12" fill="#fff" stroke="none"><path d="M1 5.6 L4.5 2 L8 5.6 Z M1 7 H8 L4.5 10.8 Z" fill="#d3d3d3"/></svg>
<svg class="a" style="left:602.7px;top:720px" width="10" height="12" viewBox="0 0 10 12" fill="#fff" stroke="none"><path d="M1 5.6 L4.5 2 L8 5.6 Z M1 7 H8 L4.5 10.8 Z" fill="#d3d3d3"/></svg>
<svg class="a" style="left:646.4px;top:720px" width="10" height="12" viewBox="0 0 10 12" fill="#fff" stroke="none"><path d="M1 5.6 L4.5 2 L8 5.6 Z M1 7 H8 L4.5 10.8 Z" fill="#d3d3d3"/></svg>
<svg class="a" style="left:732.3px;top:720px" width="10" height="12" viewBox="0 0 10 12" fill="#fff" stroke="none"><path d="M1 5.6 L4.5 2 L8 5.6 Z M1 7 H8 L4.5 10.8 Z" fill="#d3d3d3"/></svg>
<svg class="a" style="left:893.8px;top:720px" width="10" height="12" viewBox="0 0 10 12" fill="#fff" stroke="none"><path d="M1 5.6 L4.5 2 L8 5.6 Z M1 7 H8 L4.5 10.8 Z" fill="#d3d3d3"/></svg>
<svg class="a" style="left:981.1px;top:720px" width="10" height="12" viewBox="0 0 10 12" fill="#fff" stroke="none"><path d="M1 5.6 L4.5 2 L8 5.6 Z M1 7 H8 L4.5 10.8 Z" fill="#d3d3d3"/></svg>
<svg class="a" style="left:1137.2px;top:720px" width="10" height="12" viewBox="0 0 10 12" fill="#fff" stroke="none"><path d="M1 5.6 L4.5 2 L8 5.6 Z M1 7 H8 L4.5 10.8 Z" fill="#d3d3d3"/></svg>
<svg class="a" style="left:1373.3px;top:720px" width="10" height="12" viewBox="0 0 10 12" fill="#fff" stroke="none"><path d="M1 5.6 L4.5 2 L8 5.6 Z M1 7 H8 L4.5 10.8 Z" fill="#d3d3d3"/></svg>
<svg class="a" style="left:576px;top:712px" width="26" height="26" viewBox="0 0 26 26" fill="#fff" stroke="none"><g fill="none" stroke="#111" stroke-width="1.3"><path d="M9.8 6.6 L21 9.8"/><path d="M15.7 6.2 V18.8 H10.2"/><path d="M7.2 13.5 L9.8 8.4 L12.4 13.5 C12.2 14.8 11.2 15.4 9.8 15.4 C8.4 15.4 7.4 14.8 7.2 13.5 Z"/><path d="M18 16.6 L20.6 11.4 L23.2 16.6 C23 17.9 22 18.5 20.6 18.5 C19.2 18.5 18.2 17.9 18 16.6 Z"/></g><circle cx="15.7" cy="7.2" r="1.3" fill="#111"/></svg>
<svg class="a" style="left:576px;top:712px" width="80" height="26" viewBox="0 0 80 26" fill="#fff" stroke="none"><rect x="56.3" y="6.6" width="12.6" height="12.3" rx="2" fill="#212529"/><path d="M60.6 9.6 V16 M60.6 13.1 L64.6 9.6 M61.9 12.2 L64.8 16" stroke="#fff" stroke-width="1.4"/></svg>
<svg class="a" style="left:34px;top:826px" width="26" height="26" viewBox="0 0 26 26" fill="#fff" stroke="none"><path d="M9.3 7.1 C10.3 6 11.6 5.3 13 5.3 C16.8 5.3 19.5 8.3 19.5 11.8 C19.5 15.5 16.6 18.4 13 18.4 C11.2 18.4 9.6 17.8 8.4 16.6" fill="none" stroke="#fff" stroke-width="1.9" stroke-linecap="round"/><path d="M5 5.2 L10.3 9.7 H5 Z"/><path d="M13.2 8.2 V12 L14.9 13.8" fill="none" stroke="#fff" stroke-width="1.4" stroke-linecap="round"/></svg>
</body></html>
